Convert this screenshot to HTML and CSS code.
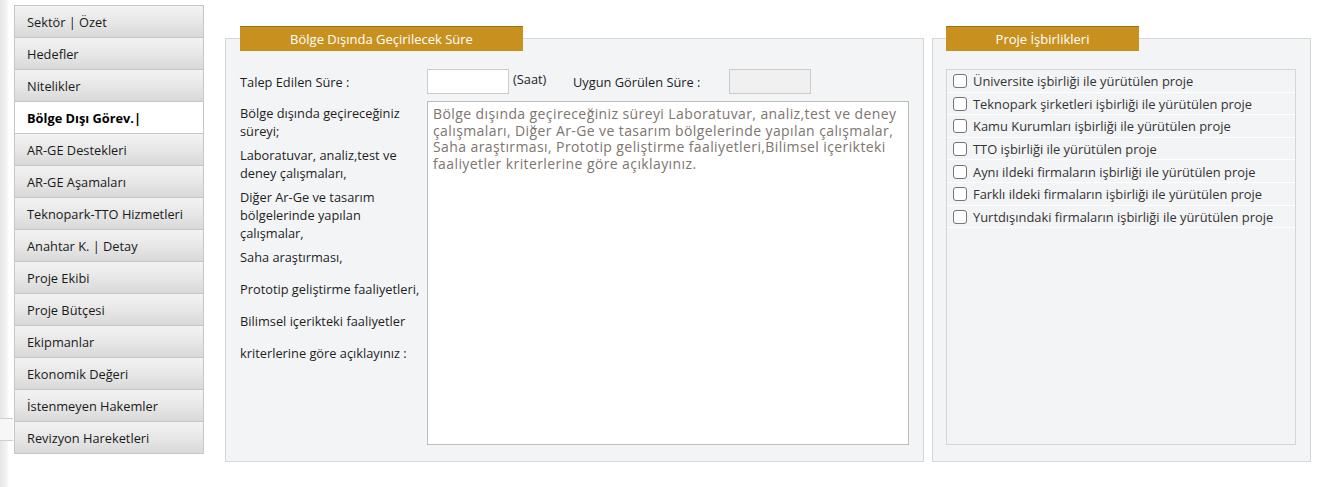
FILE: index.html
```html
<!DOCTYPE html>
<html lang="tr">
<head>
<meta charset="utf-8">
<title>Bölge Dışı Görev</title>
<link rel="stylesheet" href="styles.css">
</head>
<body>
<div class="page">
  <div class="edge"><div class="edge-lines"></div></div>
  <nav class="sidenav">
    <div class="nav-item">Sektör | Özet</div>
    <div class="nav-item">Hedefler</div>
    <div class="nav-item">Nitelikler</div>
    <div class="nav-item active">Bölge Dışı Görev.|</div>
    <div class="nav-item">AR-GE Destekleri</div>
    <div class="nav-item">AR-GE Aşamaları</div>
    <div class="nav-item">Teknopark-TTO Hizmetleri</div>
    <div class="nav-item">Anahtar K. | Detay</div>
    <div class="nav-item">Proje Ekibi</div>
    <div class="nav-item">Proje Bütçesi</div>
    <div class="nav-item">Ekipmanlar</div>
    <div class="nav-item">Ekonomik Değeri</div>
    <div class="nav-item">İstenmeyen Hakemler</div>
    <div class="nav-item">Revizyon Hareketleri</div>
  </nav>
  <main class="content">
    <section class="panel panel-main">
      <div class="tab tab-main">Bölge Dışında Geçirilecek Süre</div>
      <div class="row-time">
        <span class="lbl-time">Talep Edilen Süre :</span>
        <input class="inp" type="text">
        <span class="unit">(Saat)</span>
        <span class="lbl-approved">Uygun Görülen Süre :</span>
        <input class="inp inp-disabled" type="text" disabled>
      </div>
      <div class="row-desc">
        <div class="desc-labels">
          <p class="d1">Bölge dışında geçireceğiniz süreyi;</p>
          <p class="d2">Laboratuvar, analiz,test ve deney çalışmaları,</p>
          <p class="d2">Diğer Ar-Ge ve tasarım bölgelerinde yapılan çalışmalar,</p>
          <p class="d2">Saha araştırması,</p>
          <p class="d3">Prototip geliştirme faaliyetleri,</p>
          <p class="d4">Bilimsel içerikteki faaliyetler</p>
          <p class="d4">kriterlerine göre açıklayınız :</p>
        </div>
        <textarea class="desc-area" placeholder="Bölge dışında geçireceğiniz süreyi Laboratuvar, analiz,test ve deney çalışmaları, Diğer Ar-Ge ve tasarım bölgelerinde yapılan çalışmalar, Saha araştırması, Prototip geliştirme faaliyetleri,Bilimsel içerikteki faaliyetler kriterlerine göre açıklayınız."></textarea>
      </div>
    </section>
    <section class="panel panel-side">
      <div class="tab tab-side">Proje İşbirlikleri</div>
      <div class="coop-list">
        <label class="coop-row"><span class="cb"></span>Üniversite işbirliği ile yürütülen proje</label>
        <label class="coop-row"><span class="cb"></span>Teknopark şirketleri işbirliği ile yürütülen proje</label>
        <label class="coop-row"><span class="cb"></span>Kamu Kurumları işbirliği ile yürütülen proje</label>
        <label class="coop-row"><span class="cb"></span>TTO işbirliği ile yürütülen proje</label>
        <label class="coop-row"><span class="cb"></span>Aynı ildeki firmaların işbirliği ile yürütülen proje</label>
        <label class="coop-row"><span class="cb"></span>Farklı ildeki firmaların işbirliği ile yürütülen proje</label>
        <label class="coop-row"><span class="cb"></span>Yurtdışındaki firmaların işbirliği ile yürütülen proje</label>
      </div>
    </section>
  </main>
</div>
</body>
</html>
```
FILE: styles.css
```css
* { box-sizing: border-box; }
html, body { margin: 0; padding: 0; background: #ffffff; }
body {
  font-family: "Open Sans", "Noto Sans", "Liberation Sans", sans-serif;
  font-size: 12.8px;
  color: #1e1e1e;
}
.page {
  display: flex;
  align-items: flex-start;
  width: 1329px;
  height: 487px;
  overflow: hidden;
}
.edge {
  width: 13px;
  height: 487px;
  flex: none;
  background: linear-gradient(to right, #e6e6e6 0, #f4f4f4 7px, #ffffff 9px);
}
.edge-lines {
  margin-top: 418px;
  height: 23px;
  border-top: 1px solid #cfcfcf;
  border-bottom: 1px solid #cfcfcf;
  background: #f7f7f7;
}
.sidenav {
  flex: none;
  width: 190px;
  margin: 5px 0 0 1px;
  border-top: 1px solid #c6c6c6;
}
.nav-item {
  height: 32px;
  padding: 0 12px;
  display: flex;
  align-items: center;
  border: 1px solid #c6c6c6;
  border-top: none;
  background: linear-gradient(to bottom, #f3f3f3 0%, #e6e6e6 55%, #d9d9d9 100%);
  font-size: 12.8px;
  color: #1a1a1a;
  white-space: nowrap;
}
.nav-item.active {
  background: #ffffff;
  font-weight: bold;
  color: #000;
}
.content {
  display: flex;
  gap: 8px;
  margin-left: 21px;
  margin-top: 38px;
}
.panel {
  background: #f3f4f6;
  border: 1px solid #d7d7d7;
  height: 424px;
}
.panel-main { width: 699px; padding: 0 14px 0 14px; }
.panel-side { width: 379px; padding: 0 13px 0 13px; }
.tab {
  margin-top: -13px;
  height: 25px;
  background: #c8911f;
  border-top: 1px solid #9c7114;
  color: #ffffff;
  font-size: 13px;
  display: flex;
  align-items: center;
  justify-content: center;
}
.tab-main { width: 283px; }
.tab-side { width: 193px; }
.row-time {
  display: flex;
  align-items: center;
  margin-top: 18px;
  height: 25px;
}
.lbl-time { width: 187px; flex: none; }
.inp {
  width: 82px;
  height: 25px;
  border: 1px solid #cccccc;
  background: #ffffff;
  margin: 0;
  padding: 2px 4px;
  font: inherit;
  flex: none;
}
.inp-disabled { background: #f0f0f0; border-color: #cbcbcb; }
.unit { margin-left: 4px; width: 60px; position: relative; top: -3px; }
.lbl-approved { width: 156px; }
.row-desc {
  display: flex;
  margin-top: 7px;
}
.desc-labels {
  width: 187px;
  flex: none;
  padding-right: 4px;
  line-height: 18px;
}
.desc-labels p { margin: 0; }
.desc-labels .d1 { margin-top: 3px; }
.desc-labels .d2 { margin-top: 6px; }
.desc-labels .d3 { margin-top: 14px; }
.desc-labels .d4 { margin-top: 14px; }
.desc-area {
  width: 482px;
  height: 344px;
  border: 1px solid #bcbcbc;
  background: #ffffff;
  margin: 0;
  padding: 4px 5px 2px 5px;
  resize: none;
  font-family: "Open Sans", "Noto Sans", sans-serif;
  font-size: 14px;
  letter-spacing: 0.4px;
  line-height: 16.5px;
  color: #333;
}
.desc-area::placeholder { color: #7d7570; opacity: 1; }
.coop-list {
  margin-top: 18px;
  width: 350px;
  height: 376px;
  border: 1px solid #d6d6d6;
  background: #f3f4f6;
}
.coop-row {
  display: flex;
  align-items: center;
  height: 22.6px;
  padding-left: 6px;
  padding-top: 1px;
  border-bottom: 1px solid #ffffff;
  font-size: 12.9px;
  color: #333333;
  white-space: nowrap;
}
.cb {
  width: 14px;
  height: 14px;
  border: 1px solid #767676;
  border-radius: 3px;
  background: #ffffff;
  margin-right: 6px;
  flex: none;
}
```
